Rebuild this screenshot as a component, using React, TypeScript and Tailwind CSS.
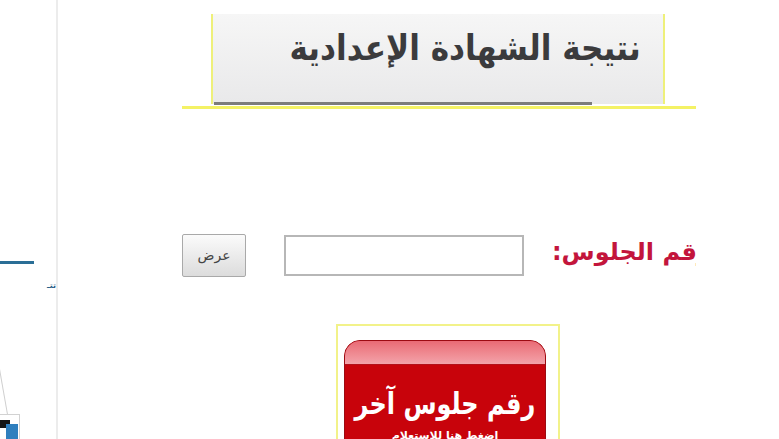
import React from 'react';

const arabic = { fontFamily: '"DejaVu Sans", sans-serif' };

export default function App() {
  return (
    <div className="w-[779px] h-[439px] bg-white flex overflow-hidden" style={arabic}>
      {/* Left sidebar strip */}
      <aside className="w-[58px] h-full border-r-2 border-[#ececec] flex flex-col shrink-0">
        <div className="h-[265px]" />
        <div className="w-[34px] h-[3px] bg-[#2a6e96]" />
        <div className="mt-[18px] pl-[1px] text-[8px] font-bold text-[#2a5d86] leading-none" dir="rtl">
          <span className="block w-[10px] overflow-hidden">تتـ</span>
        </div>
        <div className="mt-[78px] relative h-[72px]">
          <div className="absolute left-[-4px] top-[0px] w-[8px] h-[48px] border-r border-[#cfcfcf] rotate-[-10deg]" />
          <div className="absolute left-0 top-[46px] w-[20px] h-[26px] border-t border-r border-[#d2d2d2]" />
          <div className="absolute left-0 top-[52px] w-[10px] h-[8px] bg-[#151515]" />
          <div className="absolute left-[6px] top-[56px] w-[12px] h-[16px] bg-[#2f7fbe]" />
        </div>
      </aside>

      {/* Main content */}
      <main className="flex-1 pl-[124px]">
        <div className="w-[514px] h-full overflow-hidden flex flex-col">
          {/* Title box */}
          <div className="pt-[14px]">
            <div className="ml-[29px] w-[454px] h-[90px] border-x-2 border-[#eef07a] bg-gradient-to-b from-[#f6f6f6] to-[#e9e9ea] flex flex-col">
              <div className="flex-1 flex items-center justify-end pr-[22px] pb-[20px]">
                <h1 dir="rtl" className="text-[35px] font-bold text-[#3b3b3d] leading-none whitespace-nowrap scale-x-[0.89] origin-right">
                  نتيجة الشهادة الإعدادية
                </h1>
              </div>
              <div className="ml-[1px] w-[378px] h-[3px] bg-[#7c7c7c] mb-[-1px]" />
            </div>
            <div className="mt-[2px] h-[3px] bg-[#f4f265]" />
          </div>

          {/* Seat number row */}
          <div className="mt-[125px] flex items-center h-[43px] relative">
            <button className="w-[64px] h-[43px] border border-[#a9a9a9] rounded-[2px] bg-gradient-to-b from-[#fbfbfb] to-[#dcdcdc] text-[14px] text-[#444]" dir="rtl">
              عرض
            </button>
            <div className="ml-[38px] w-[240px] h-[41px] border-2 border-[#b7b7b7] bg-white" />
            <div className="absolute left-[370px] top-[6px] whitespace-nowrap text-[24px] font-bold text-[#c3153c] leading-none" dir="rtl">
              رقم الجلوس:
            </div>
          </div>

          {/* Other seat number button */}
          <div className="mt-[47px] ml-[154px] w-[224px] flex-1 border-2 border-b-0 border-[#f2f28a] pt-[14px] px-[6px]">
            <div className="w-[202px] h-full rounded-t-[16px] border border-[#9c0b12] bg-[#c8030b] overflow-hidden flex flex-col">
              <div className="h-[24px] bg-gradient-to-b from-[#e96a75] to-[#f3a3aa] border-b border-[#b3111a]" />
              <div className="flex-1 flex flex-col items-center pt-[24px]" dir="rtl">
                <span className="text-[30px] font-bold text-white leading-none whitespace-nowrap scale-x-[0.8]">رقم جلوس آخر</span>
                <span className="mt-[11px] text-[11px] font-bold text-white leading-none whitespace-nowrap">اضغط هنا للاستعلام</span>
              </div>
            </div>
          </div>
        </div>
      </main>
    </div>
  );
}
